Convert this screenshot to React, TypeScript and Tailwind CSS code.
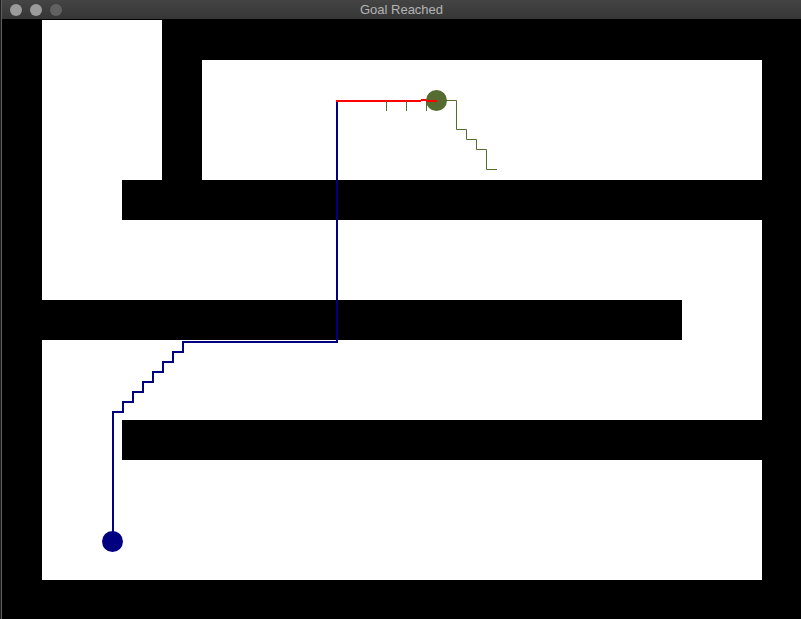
import React from "react";

const MAP = [
  "#...################",
  "#...#..............#",
  "#...#..............#",
  "#...#..............#",
  "#..#################",
  "#..................#",
  "#..................#",
  "#################..#",
  "#..................#",
  "#..................#",
  "#..#################",
  "#..................#",
  "#..................#",
  "#..................#",
  "####################",
];

export default function App() {
  return (
    <div className="relative w-[801px] h-[619px] overflow-hidden bg-black flex">
      <div className="w-px h-full bg-[#1e1e1e]" />
      <div className="w-px h-full bg-[#5e5e5e]" />
      <div className="flex flex-col w-[799px] h-full">
        <div className="h-[19px] bg-gradient-to-b from-[#444444] to-[#363636] relative flex items-center pl-2 gap-2 shrink-0">
          <div className="w-3 h-3 rounded-full bg-[#9b9b9b]" />
          <div className="w-3 h-3 rounded-full bg-[#9b9b9b]" />
          <div className="w-3 h-3 rounded-full bg-[#616161]" />
          <div
            className="absolute inset-0 flex items-center justify-center text-[13px] text-[#b4b4b4] leading-none"
            style={{ fontFamily: '"Liberation Sans", Arial, sans-serif' }}
          >
            Goal Reached
          </div>
        </div>
        <div className="h-px bg-black shrink-0" />
        <div className="grid grid-cols-[repeat(19,40px)_39px] grid-rows-[repeat(15,40px)] shrink-0">
          {MAP.flatMap((row, r) =>
            row.split("").map((c, i) => (
              <div key={`${r}-${i}`} className={c === "#" ? "bg-black" : "bg-white"} />
            ))
          )}
        </div>
      </div>
      <svg
        className="absolute left-0 top-0 pointer-events-none"
        width={801}
        height={619}
        viewBox="0 0 801 619"
      >
        <path
          d="M113 541 V412 H123 V402 H133 V392 H143 V382 H153 V372 H163 V362 H173 V352 H183 V342 H337 V100"
          fill="none"
          stroke="#000080"
          strokeWidth={2}
        />
        <path d="M336 101 H421" stroke="#ff0000" strokeWidth={2} fill="none" />
        <path d="M421 100 H431" stroke="#ff0000" strokeWidth={2} fill="none" />
        <path d="M431 101 H437" stroke="#ff0000" strokeWidth={2} fill="none" />
        <g stroke="#556b2f" strokeWidth={1} fill="none">
          <path d="M386.5 101 V111" />
          <path d="M406.5 101 V111" />
          <path d="M426.5 101 V111" />
          <path d="M446 100.5 H456.5 V129.5 H466.5 V139.5 H476.5 V149.5 H486.5 V169.5 H497" />
        </g>
        <circle cx={436.5} cy={100.5} r={10.5} fill="#556b2f" />
        <path d="M426 101 H437" stroke="#ff0000" strokeWidth={2} fill="none" />
        <circle cx={112.5} cy={541.5} r={10.5} fill="#000080" />
      </svg>
    </div>
  );
}
